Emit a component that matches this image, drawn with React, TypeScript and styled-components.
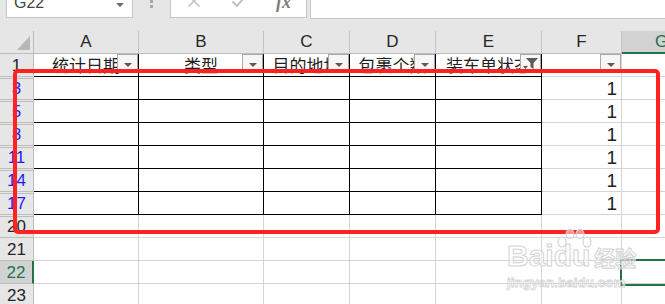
import React from "react";
import styled, { createGlobalStyle } from "styled-components";

const GlobalStyle = createGlobalStyle`
  html, body {
    margin: 0;
    padding: 0;
    background: #e6e6e6;
  }
  body {
    font-family: "Liberation Sans", "Noto Sans CJK SC", sans-serif;
  }
  * {
    box-sizing: border-box;
  }
`;

const Window = styled.div`
  position: relative;
  width: 665px;
  height: 304px;
  overflow: hidden;
  background: #e6e6e6;
`;

/* ---------- formula bar ---------- */

const FormulaBar = styled.div`
  display: flex;
  align-items: flex-start;
  height: 31px;
  padding-left: 6px;
`;

const NameBox = styled.div`
  display: flex;
  align-items: flex-start;
  justify-content: space-between;
  width: 127px;
  height: 18px;
  padding: 0 8px 0 7px;
  background: #fff;
  border: 1px solid #c6c6c6;
  border-top: none;
  overflow: hidden;
  font-size: 16px;
  line-height: 18px;
  color: #444;

  span {
    margin-top: -6px;
  }
`;

const DropArrow = styled.i`
  margin-top: 3px;
  border-left: 4px solid transparent;
  border-right: 4px solid transparent;
  border-top: 4px solid #6b6b6b;
`;

const Grip = styled.div`
  width: 37px;
  height: 18px;
  display: flex;
  justify-content: center;

  &::before {
    content: "";
    width: 3px;
    height: 3px;
    background: #a8a8a8;
    box-shadow: 0 5px 0 #a8a8a8;
  }
`;

const FxBox = styled.div`
  display: flex;
  align-items: flex-start;
  width: 137px;
  height: 18px;
  padding-left: 16px;
  background: #fff;
  border: 1px solid #c6c6c6;
  border-top: none;
  overflow: hidden;
`;

const BarIcon = styled.svg<{ $gap: number }>`
  margin-top: -6px;
  margin-left: ${(p) => p.$gap}px;
  flex: none;
`;

const Fx = styled.span`
  margin-top: -7px;
  margin-left: 29px;
  font-family: "Liberation Serif", serif;
  font-style: italic;
  font-weight: 700;
  font-size: 18px;
  line-height: 18px;
  color: #7d7d7d;
`;

const FormulaInput = styled.div`
  flex: 1;
  height: 19px;
  margin-left: 3px;
  background: #fff;
  border-bottom: 1px solid #c6c6c6;
  border-left: 1px solid #c6c6c6;
`;

/* ---------- sheet ---------- */

const Sheet = styled.div`
  display: grid;
  width: 702px;
  grid-template-columns: 34px 105px 125px 86px 86px 106px 80px 80px;
  grid-auto-rows: 23px;
`;

const Corner = styled.div`
  position: relative;
  background: #e6e6e6;
  border-right: 1px solid #bcbcbc;
  border-bottom: 1px solid #bcbcbc;

  &::after {
    content: "";
    position: absolute;
    right: 3px;
    bottom: 3px;
    border-left: 13px solid transparent;
    border-bottom: 14px solid #b7b7b7;
  }
`;

const ColHead = styled.div<{ $active?: boolean }>`
  display: flex;
  align-items: center;
  justify-content: center;
  background: ${(p) => (p.$active ? "#d2d2d2" : "#e6e6e6")};
  border-right: 1px solid #c4c4c4;
  border-bottom: ${(p) => (p.$active ? "2px solid #217346" : "1px solid #bcbcbc")};
  font-size: 17px;
  color: ${(p) => (p.$active ? "#217346" : "#262626")};
`;

const RowHead = styled.div<{ $tone: "plain" | "filtered" | "active"; $gapAbove?: boolean }>`
  display: flex;
  align-items: center;
  justify-content: center;
  padding-top: 1px;
  background: ${(p) =>
    p.$tone === "active"
      ? "#d2d2d2"
      : p.$gapAbove
      ? "linear-gradient(#e6e6e6 0 1px, #bcbcbc 1px 2px, #e6e6e6 2px)"
      : "#e6e6e6"};
  border-right: ${(p) => (p.$tone === "active" ? "2px solid #217346" : "1px solid #bcbcbc")};
  border-bottom: 1px solid #bcbcbc;
  font-size: 17px;
  color: ${(p) =>
    p.$tone === "active" ? "#217346" : p.$tone === "filtered" ? "#1d1dff" : "#262626"};
`;

const Cell = styled.div<{ $boxed?: boolean; $selected?: boolean }>`
  position: relative;
  display: flex;
  align-items: flex-end;
  justify-content: flex-end;
  padding-right: 4px;
  background: #fff;
  border-right: 1px solid ${(p) => (p.$boxed ? "#000" : "#d4d4d4")};
  border-bottom: 1px solid ${(p) => (p.$boxed ? "#000" : "#d4d4d4")};
  font-size: 19px;
  line-height: 21px;
  color: #1f1f1f;
  ${(p) => p.$selected && "outline: 2px solid #217346; z-index: 2;"}
`;

const TitleCell = styled(Cell)`
  justify-content: center;
  align-items: center;
  padding: 0;
  overflow: hidden;
  white-space: nowrap;
  font-family: "Noto Sans CJK SC", sans-serif;
  font-size: 17px;
  line-height: 22px;
  color: #1f1f1f;
`;

const FilterButton = styled.span`
  position: absolute;
  top: 0;
  right: 0;
  width: 21px;
  height: 19px;
  display: flex;
  align-items: center;
  justify-content: center;
  background: #f6f6f6;
  border: 1px solid #a9a9a9;
`;

const FilterArrow = styled.i`
  margin-top: 2px;
  border-left: 4px solid transparent;
  border-right: 4px solid transparent;
  border-top: 4px solid #5a5a5a;
`;

/* ---------- overlays ---------- */

const Highlight = styled.div`
  position: absolute;
  left: 13px;
  top: 69px;
  width: 647px;
  height: 165px;
  border: 4px solid #ff2220;
  border-radius: 5px;
  pointer-events: none;
  z-index: 3;
`;

const Watermark = styled.div`
  position: absolute;
  left: 507px;
  top: 229px;
  width: 130px;
  pointer-events: none;
  z-index: 3;
  font-weight: 700;
  color: rgba(255, 255, 255, 0.55);
  -webkit-text-stroke: 1px #d3d3d3;
`;

const MarkLine = styled.div`
  display: flex;
  align-items: flex-end;
  height: 42px;
  font-size: 30px;
  line-height: 30px;
`;

const Paw = styled.svg`
  position: absolute;
  left: 47px;
  top: 0;
`;

const MarkCn = styled.span`
  margin-left: 4px;
  font-family: "Noto Sans CJK SC", sans-serif;
  font-size: 21px;
  line-height: 27px;
`;

const MarkUrl = styled.div`
  margin-top: 4px;
  font-size: 13.5px;
  line-height: 16px;
  -webkit-text-stroke: 0.8px #d3d3d3;
`;

const columns = ["A", "B", "C", "D", "E", "F", "G"];
const titles = ["统计日期", "类型", "目的地址", "包裹个数", "装车单状态", "", ""];

type RowDef = {
  label: string;
  tone: "plain" | "filtered" | "active";
  gapAbove?: boolean;
  boxed?: boolean;
  value?: string;
};

const rows: RowDef[] = [
  { label: "3", tone: "filtered", gapAbove: true, boxed: true, value: "1" },
  { label: "5", tone: "filtered", gapAbove: true, boxed: true, value: "1" },
  { label: "8", tone: "filtered", gapAbove: true, boxed: true, value: "1" },
  { label: "11", tone: "filtered", gapAbove: true, boxed: true, value: "1" },
  { label: "14", tone: "filtered", gapAbove: true, boxed: true, value: "1" },
  { label: "17", tone: "filtered", gapAbove: true, boxed: true, value: "1" },
  { label: "20", tone: "plain", gapAbove: true },
  { label: "21", tone: "plain" },
  { label: "22", tone: "active" },
  { label: "23", tone: "plain" },
];

const Funnel = () => (
  <svg width="16" height="13" viewBox="0 0 16 13">
    <path d="M3 1 H15 L10.5 6 V12 L7.5 10 V6 Z" fill="#5a5a5a" />
    <path d="M0 9 H5 L2.5 12 Z" fill="#5a5a5a" />
  </svg>
);

const App = () => {
  return (
    <Window>
      <GlobalStyle />
      <FormulaBar>
        <NameBox>
          <span>G22</span>
          <DropArrow />
        </NameBox>
        <Grip />
        <FxBox>
          <BarIcon $gap={0} width="14" height="14" viewBox="0 0 14 14">
            <path d="M1.5 1.5 L12.5 12.5 M12.5 1.5 L1.5 12.5" stroke="#c2c2c2" strokeWidth="1.6" />
          </BarIcon>
          <BarIcon $gap={30} width="16" height="14" viewBox="0 0 16 14">
            <path d="M1.5 7.5 L6 12 L14.5 2" stroke="#c2c2c2" strokeWidth="2" fill="none" />
          </BarIcon>
          <Fx>fx</Fx>
        </FxBox>
        <FormulaInput />
      </FormulaBar>

      <Sheet>
        <Corner />
        {columns.map((c) => (
          <ColHead key={c} $active={c === "G"}>
            {c}
          </ColHead>
        ))}

        <RowHead $tone="plain">1</RowHead>
        {titles.map((t, i) => (
          <TitleCell key={i} $boxed={i < 5}>
            {t}
            {i < 6 && <FilterButton>{i === 4 ? <Funnel /> : <FilterArrow />}</FilterButton>}
          </TitleCell>
        ))}

        {rows.map((r) => (
          <React.Fragment key={r.label}>
            <RowHead $tone={r.tone} $gapAbove={r.gapAbove}>
              {r.label}
            </RowHead>
            {columns.map((c, i) => (
              <Cell key={c} $boxed={r.boxed && i < 5} $selected={r.tone === "active" && c === "G"}>
                {c === "F" ? r.value : null}
              </Cell>
            ))}
          </React.Fragment>
        ))}
      </Sheet>

      <Highlight />

      <Watermark>
        <Paw width="40" height="22" viewBox="0 0 40 22">
          <g fill="rgba(255,255,255,0.5)" stroke="#d3d3d3" strokeWidth="1.2">
            <ellipse cx="8" cy="13" rx="4" ry="5" />
            <ellipse cx="16" cy="5" rx="4" ry="4.5" />
            <ellipse cx="26" cy="5" rx="4" ry="4.5" />
            <ellipse cx="33" cy="13" rx="4" ry="5" />
          </g>
        </Paw>
        <MarkLine>
          <span>Bai</span>
          <span>du</span>
          <MarkCn>经验</MarkCn>
        </MarkLine>
        <MarkUrl>jingyan.baidu.com</MarkUrl>
      </Watermark>
    </Window>
  );
};

export default App;
